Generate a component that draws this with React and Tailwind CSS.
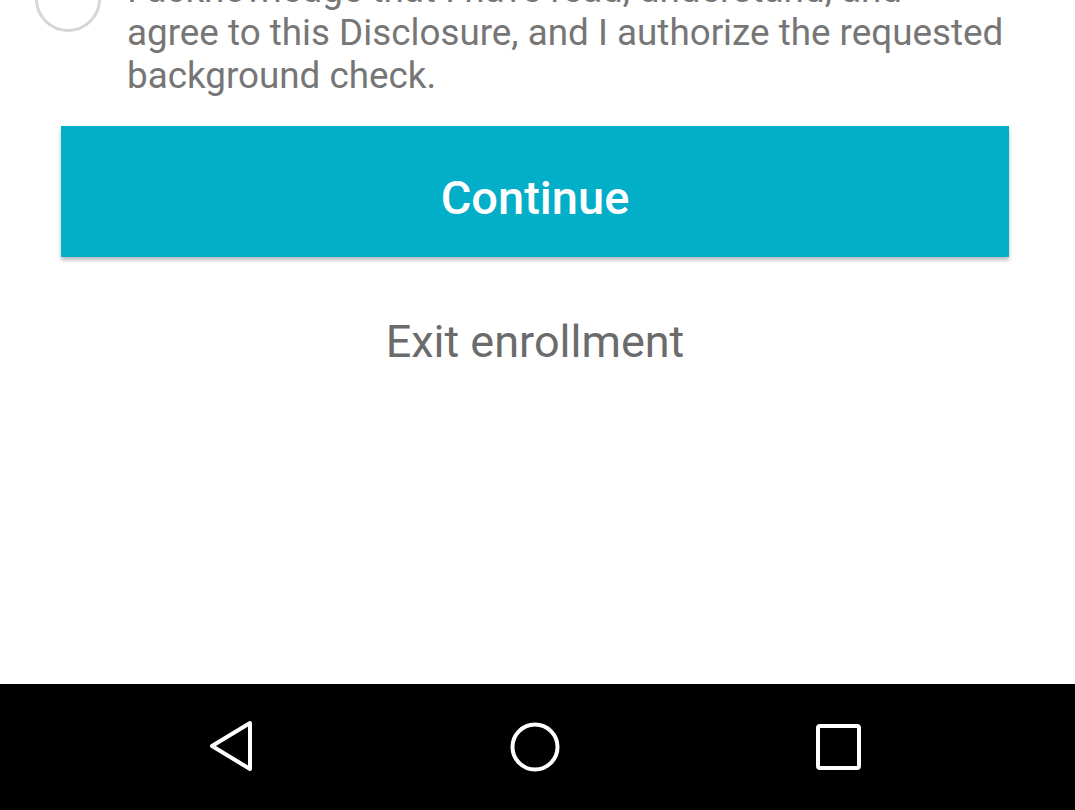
export default function App() {
  return (
    <div
      className="w-[1075px] h-[810px] flex flex-col bg-white overflow-hidden"
      style={{ fontFamily: "Roboto, 'Noto Sans', sans-serif" }}
    >
      <div className="flex-1">
        {/* Consent row, scrolled partly out of view */}
        <div className="flex items-start mt-[-36px] pl-[35px] gap-[26px]">
          <div className="mt-[2px] w-[66px] h-[66px] shrink-0 rounded-full border-[3px] border-[#d6d6d6]" />
          <p className="pt-[4px] text-[36.8px] leading-[43px] text-[#767676] whitespace-nowrap">
            I acknowledge that I have read, understand, and
            <br />
            agree to this Disclosure, and I authorize the requested
            <br />
            background check.
          </p>
        </div>

        {/* Continue */}
        <button className="mt-[29px] ml-[61px] w-[948px] h-[131px] pt-[14px] bg-[#03aec9] text-white text-[47px] font-medium shadow-[0_3px_4px_rgba(0,0,0,0.28)]">
          Continue
        </button>

        <div className="mt-[60px] h-[50px] pr-[5px] flex items-center justify-center text-[45px] text-[#6b6b6b]">
          Exit enrollment
        </div>
      </div>

      {/* Android nav bar */}
      <div className="h-[126px] bg-black flex items-center justify-center pr-[6px]">
        <div className="w-[304px] flex justify-center pl-[4px]">
          <svg width="50" height="54" viewBox="0 0 50 54" fill="none" stroke="white" strokeWidth="4" strokeLinejoin="round">
            <path d="M42 3 L4 26 L42 49 Z" />
          </svg>
        </div>
        <div className="w-[304px] flex justify-center">
          <svg width="54" height="54" viewBox="0 0 54 54" fill="none" stroke="white" strokeWidth="4">
            <circle cx="27" cy="27" r="22.5" />
          </svg>
        </div>
        <div className="w-[304px] flex justify-center">
          <svg width="48" height="48" viewBox="0 0 48 48" fill="none" stroke="white" strokeWidth="4">
            <rect x="3" y="3" width="41" height="42" rx="2" />
          </svg>
        </div>
      </div>
    </div>
  );
}
